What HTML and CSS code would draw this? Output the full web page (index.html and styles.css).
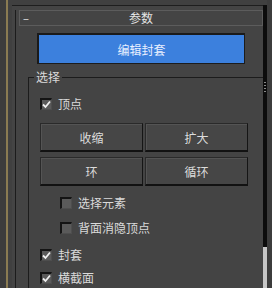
FILE: index.html
```html
<!DOCTYPE html>
<html lang="zh-CN">
<head>
    <meta charset="UTF-8">
    <meta name="viewport" content="width=device-width, initial-scale=1.0">
    <title>参数</title>
    <link rel="stylesheet" href="styles.css">
</head>
<body>
    <div class="app">
        <div class="side"></div>
        <div class="gold"></div>
        <div class="main">
            <div class="panel">
                <div class="rollout">
                    <div class="head">
                        <span class="collapse">–</span>
                        <span class="title">参数</span>
                    </div>
                    <button class="blue-btn">编辑封套</button>

                    <div class="group">
                        <div class="group-title">选择</div>

                        <label class="check-row">
                            <span class="box checked"></span>顶点
                        </label>

                        <div class="btn-grid">
                            <button class="btn">收缩</button>
                            <button class="btn">扩大</button>
                            <button class="btn">环</button>
                            <button class="btn">循环</button>
                        </div>

                        <label class="check-row sub first-sub">
                            <span class="box"></span>选择元素
                        </label>
                        <label class="check-row sub second-sub">
                            <span class="box"></span>背面消隐顶点
                        </label>
                        <label class="check-row envelope">
                            <span class="box checked"></span>封套
                        </label>
                        <label class="check-row section">
                            <span class="box checked"></span>横截面
                        </label>
                    </div>
                </div>
            </div>
        </div>
        <div class="scroll">
            <div class="track">
                <div class="grip"></div>
            </div>
            <div class="thumb"></div>
        </div>
        <div class="edge"></div>
    </div>
</body>
</html>
```

FILE: styles.css
```css
body {
    margin: 0;
    background-color: #444444;
    font-family: "Noto Sans CJK SC", "Noto Sans", sans-serif;
    font-size: 12px;
    color: #dadada;
    overflow: hidden;
}

.app {
    display: flex;
    width: 272px;
    height: 288px;
    overflow: hidden;
}

.side {
    width: 6px;
    background-color: #3c3c3c;
}

.gold {
    width: 2px;
    background-color: #8a7b52;
}

.main {
    flex: 1;
    padding: 5px 0 0 4px;
    background-color: #404040;
}

.panel {
    height: 100%;
    border-top: 1px solid #1e1e1e;
    background-color: #444444;
}

.rollout {
    margin: 12px 0 0 3px;
    height: 100%;
    border-left: 1px solid #1c1c1c;
}

/* rollout title bar */
.head {
    position: relative;
    display: flex;
    align-items: center;
    justify-content: center;
    height: 14px;
    margin: -8px 0 0 3px;
    border: 1px solid #5c5c5c;
    color: #e6e6e6;
}

.collapse {
    position: absolute;
    left: 3px;
    top: -1px;
    font-size: 11px;
    color: #f0f0f0;
}

.title {
    line-height: 14px;
    margin-left: 0;
}

button {
    font-family: inherit;
    font-size: 12px;
    color: #dcdcdc;
    padding: 0;
    cursor: pointer;
}

.blue-btn {
    display: block;
    width: 208px;
    height: 31px;
    margin: 7px 0 0 21px;
    background-color: #3c80dd;
    border: 1px solid #1c1c1c;
    border-top: 2px solid #1a1a1a;
    border-left: 2px solid #1a1a1a;
    color: #e8efff;
}

.group {
    margin: 13px 0 0 12px;
    border-top: 1px solid #1c1c1c;
    border-left: 1px solid #1c1c1c;
    padding-left: 11px;
    height: 100%;
}

.group-title {
    width: fit-content;
    margin: -9px 0 0 -6px;
    padding: 0 2px;
    line-height: 16px;
    background-color: #444444;
}

.check-row {
    display: flex;
    align-items: center;
    gap: 6px;
    height: 12px;
    margin-top: 13px;
    line-height: 12px;
}

.box {
    box-sizing: border-box;
    width: 12px;
    height: 12px;
    background-color: #5a5a5a;
    border-top: 2px solid #141414;
    border-left: 2px solid #141414;
    border-right: 1px solid #4e4e4e;
    border-bottom: 1px solid #4e4e4e;
}

.box.checked {
    background-image: url("data:image/svg+xml,%3Csvg xmlns='http://www.w3.org/2000/svg' width='9' height='9' viewBox='0 0 9 9'%3E%3Cpath d='M1 4.5 L3.5 7 L8 1.5' fill='none' stroke='%23f0f0f0' stroke-width='1.8'/%3E%3C/svg%3E");
    background-repeat: no-repeat;
    background-position: center;
}

.btn-grid {
    display: grid;
    grid-template-columns: 103px 103px;
    grid-auto-rows: 29px;
    column-gap: 2px;
    row-gap: 5px;
    margin-top: 13px;
}

.btn {
    box-sizing: border-box;
    background-color: #464646;
    border: 1px solid #2a2a2a;
    border-right-color: #151515;
    border-bottom: 2px solid #121212;
    box-shadow: inset 1px 1px 0 #545454;
}

.sub {
    margin-left: 20px;
}

.first-sub {
    margin-top: 11px;
}

.second-sub {
    margin-top: 13px;
}

.envelope {
    margin-top: 15px;
}

.section {
    margin-top: 11px;
}

.scroll {
    width: 4px;
    padding-top: 5px;
    display: flex;
    flex-direction: column;
    background-color: #404040;
}

.track {
    height: 165px;
    background-color: #0c0c0c;
    padding-top: 77px;
}

.grip {
    height: 10px;
    margin: 0 1px;
    background: repeating-linear-gradient(to bottom, #8a8a8a 0, #8a8a8a 1px, transparent 1px, transparent 3px);
}

.thumb {
    flex: 1;
    background-color: #c6c6c6;
}

.edge {
    width: 5px;
    background-color: #3c3c3c;
}
```
